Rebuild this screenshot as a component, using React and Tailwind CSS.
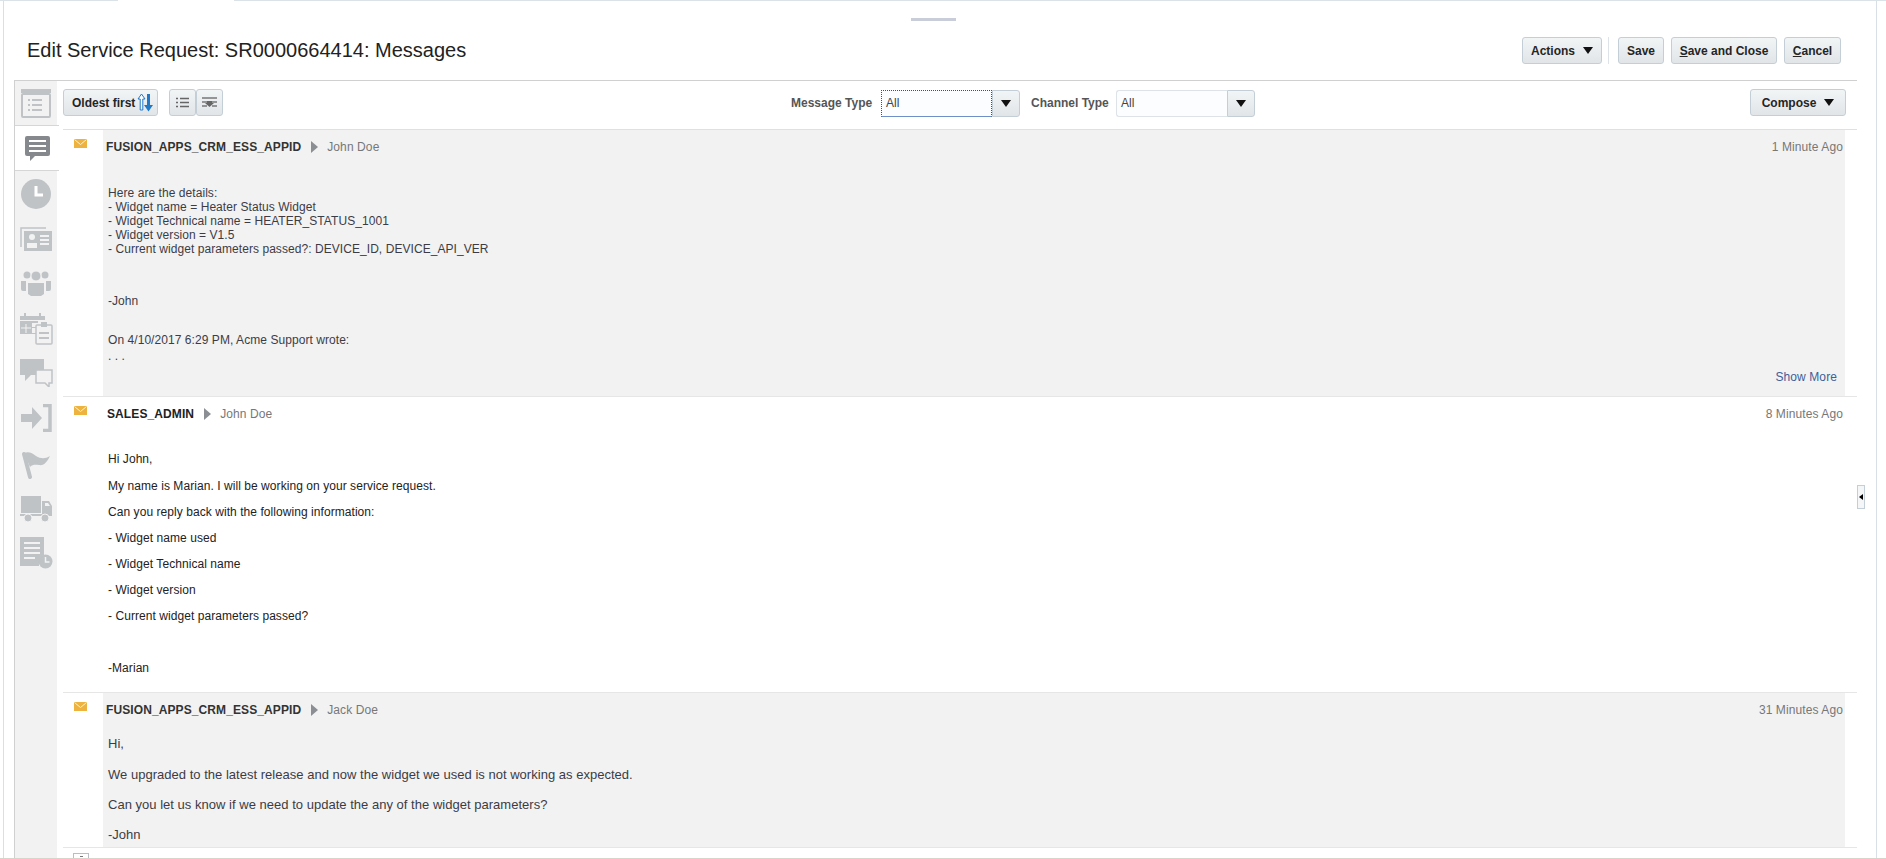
import React from 'react';

const Tri = ({ className = '' }) => (
  <svg width="10" height="7" viewBox="0 0 10 7" className={className}><path d="M0 0h10L5 7z" fill="#111" /></svg>
);

const Btn = ({ className = '', children }) => (
  <button className={`h-[27px] border border-[#c4ced7] rounded-[3px] bg-gradient-to-b from-[#f2f5f6] to-[#e1e5e8] text-[12px] font-bold text-[#252525] flex items-center justify-center ${className}`}>
    {children}
  </button>
);

const Envelope = () => (
  <svg width="13" height="9" viewBox="0 0 13 9" className="ml-[11px] mt-[9px]">
    <rect width="13" height="9" fill="#eeb33f" />
    <path d="M0.500 0.500L6.500 5.500L12.500 0.500" fill="none" stroke="#fdf2d0" strokeWidth="1" />
  </svg>
);

const Side = ({ active, h, children }) => (
  <div className={`flex items-center justify-center ${h} ${active ? 'bg-white border-y border-[#d6d6d6] w-[44px]' : ''}`}>{children}</div>
);

const G = '#bfc3c6';

const SideIcons = () => (
  <div className="w-[43px] shrink-0 bg-[#f2f2f2] border-l border-[#d0d0d0] flex flex-col">
    <Side h="h-[44px]">
      <svg width="30" height="29" viewBox="0 0 30 29">
        <rect x="0" y="0" width="30" height="4" fill={G} />
        <rect x="1" y="5" width="28" height="23" rx="1" fill="none" stroke={G} strokeWidth="2" />
        <path d="M7 11h2M11 11h10M7 16h2M11 16h10M7 21h2M11 21h10" stroke={G} strokeWidth="2" />
      </svg>
    </Side>
    <Side active h="h-[46px]">
      <svg width="25" height="25" viewBox="0 0 25 25">
        <path d="M2 0h21a2 2 0 0 1 2 2v16a2 2 0 0 1-2 2H10l-5 5v-5H2a2 2 0 0 1-2-2V2a2 2 0 0 1 2-2z" fill="#85898d" />
        <path d="M4 5h17M4 10h17M4 15h17" stroke="#fff" strokeWidth="2" />
      </svg>
    </Side>
    <Side h="h-[45px]">
      <svg width="30" height="30" viewBox="0 0 30 30">
        <circle cx="15" cy="15" r="15" fill={G} />
        <path d="M15 7v9h7" fill="none" stroke="#fff" strokeWidth="3" />
      </svg>
    </Side>
    <Side h="h-[45px]">
      <svg width="32" height="24" viewBox="0 0 32 24">
        <path d="M1 20V1h25" fill="none" stroke={G} strokeWidth="1.500" />
        <rect x="4" y="4" width="28" height="20" fill={G} />
        <circle cx="12" cy="10" r="3" fill="#f2f2f2" />
        <path d="M7 21v-5h10v5z" fill="#f2f2f2" />
        <path d="M20 9h9M20 13h9M20 17h9" stroke="#f2f2f2" strokeWidth="2" />
      </svg>
    </Side>
    <Side h="h-[45px]">
      <svg width="30" height="25" viewBox="0 0 30 25">
        <circle cx="6" cy="4" r="3.500" fill={G} /><circle cx="24" cy="4" r="3.500" fill={G} />
        <circle cx="15" cy="5" r="5" fill={G} stroke="#f2f2f2" />
        <path d="M0 10h5v10H2a2 2 0 0 1-2-2zM25 10h5v8a2 2 0 0 1-2 2h-3z" fill={G} />
        <path d="M7 12h16v11l-3 2H10l-3-2z" fill={G} />
      </svg>
    </Side>
    <Side h="h-[44px]">
      <svg width="33" height="33" viewBox="0 0 33 33">
        <path d="M0 4h25v4H0zM0 9h18v2h-6v4h5v1h-5v5h5v1H0z" fill={G} />
        <path d="M5 1v5M20 1v5" stroke={G} strokeWidth="2" />
        <path d="M6 12v9M1 16h10" stroke="#f2f2f2" strokeWidth="1" />
        <rect x="16" y="13" width="16" height="19" rx="1" fill="#f2f2f2" stroke={G} strokeWidth="1.500" />
        <rect x="21" y="10" width="6" height="5" fill={G} />
        <path d="M19 21h10M19 26h10" stroke={G} strokeWidth="2" />
      </svg>
    </Side>
    <Side h="h-[45px]">
      <svg width="33" height="28" viewBox="0 0 33 28">
        <path d="M0 0h24v16H11l-6 6v-6H0z" fill={G} />
        <path d="M16 11h16v13h-3v4l-4-4h-9z" fill="#f2f2f2" stroke={G} strokeWidth="1.500" />
      </svg>
    </Side>
    <Side h="h-[45px]">
      <svg width="31" height="28" viewBox="0 0 31 28">
        <path d="M0 10h11V3l10 11-10 11v-7H0z" fill={G} />
        <path d="M22 1.500h7v25h-7" fill="none" stroke={G} strokeWidth="3.500" />
      </svg>
    </Side>
    <Side h="h-[46px]">
      <svg width="30" height="28" viewBox="0 0 30 28" className="mt-[3px]">
        <path d="M3 3l6 23" stroke={G} strokeWidth="4" strokeLinecap="round" />
        <path d="M3 2c5-2 8 0 12 3 5 3 9 3 14 0-3 6-6 10-11 9-3 0-6-1-9 2z" fill={G} />
      </svg>
    </Side>
    <Side h="h-[44px]">
      <svg width="32" height="26" viewBox="0 0 32 26" className="mt-[2px]">
        <rect x="1" y="0" width="20" height="17" fill={G} />
        <path d="M22 5h7l3 5v8H22z" fill={G} />
        <path d="M25 7h3l2 3h-5z" fill="#f2f2f2" />
        <rect x="0" y="18" width="32" height="2" fill={G} />
        <circle cx="8" cy="22" r="4" fill={G} stroke="#f2f2f2" /><circle cx="25" cy="22" r="4" fill={G} stroke="#f2f2f2" />
      </svg>
    </Side>
    <Side h="h-[46px]">
      <svg width="33" height="32" viewBox="0 0 33 32">
        <path d="M0 0h24v20a8 8 0 0 0-5 9H0z" fill={G} />
        <path d="M4 6h16M4 11h16M4 16h16M4 21h11" stroke="#f2f2f2" strokeWidth="2" />
        <circle cx="25.500" cy="24.500" r="7" fill={G} />
        <path d="M25.500 20v5h4" fill="none" stroke="#f2f2f2" strokeWidth="1.500" />
      </svg>
    </Side>
  </div>
);

const Select = ({ focused }) => (
  <div className="flex h-[27px] w-[139px]">
    <div className={`flex-1 flex items-center pl-[4px] text-[12px] text-[#444] bg-[#fbfdff] ${focused ? 'border border-dotted border-[#2b4fa8] border-b-[#6f8fc9] [border-bottom-style:solid]' : 'border border-r-0 border-[#dde3e8] rounded-l-[3px]'}`}>All</div>
    <div className="w-[28px] flex items-center justify-center border border-[#c4ced7] rounded-r-[3px] bg-gradient-to-b from-[#f2f5f6] to-[#e1e5e8]">
      <Tri />
    </div>
  </div>
);

const MsgHead = ({ from, to, time, fromClass = 'text-[#333]', left = 'pl-[3px]' }) => (
  <div className={`flex items-center h-[34px] ${left} pr-[2px] text-[12px] tracking-[0.1px]`}>
    <span className={`font-bold ${fromClass}`}>{from}</span>
    <svg width="7" height="12" viewBox="0 0 7 12" className="ml-[10px] mr-[9px]"><path d="M0 0l7 6-7 6z" fill="#8b8f93" /></svg>
    <span className="text-[#777]">{to}</span>
    <span className="ml-auto text-[#777]">{time}</span>
  </div>
);

export default function App() {
  return (
    <div className="relative h-[859px] w-[1886px] overflow-hidden bg-white border-b border-[#d8d3cb] font-['Liberation_Sans',Arial,sans-serif]">
      <div className="flex h-[1px] bg-[#dbe2e8]">
        <div className="ml-[118px] w-[116px] bg-white" />
      </div>
      <div className="ml-[3px] mr-[9px] h-[858px] border-x border-[#d9dfe6] pl-[10px] pr-[19px]">
        <div className="h-[80px] relative flex items-end pb-[18px] border-b border-[#d0d0d0]">
          <div className="absolute left-[897px] top-[17px] w-[45px] h-[3px] bg-[#c9cdd9]" />
          <h1 className="ml-[13px] text-[20px] leading-[24px] text-[#222] font-normal">Edit Service Request: SR0000664414: Messages</h1>
          <div className="ml-auto mr-[16px] flex items-center -mb-[2px]">
            <Btn className="w-[80px] gap-[8px]">Actions <Tri /></Btn>
            <div className="w-px h-[27px] bg-[#dde3e8] ml-[6px] mr-[9px]" />
            <Btn className="w-[46px]">Save</Btn>
            <Btn className="w-[106px] ml-[7px]"><span><u>S</u>ave and Close</span></Btn>
            <Btn className="w-[57px] ml-[7px]"><span><u>C</u>ancel</span></Btn>
          </div>
        </div>
        <div className="flex h-[777px]">
          <SideIcons />
          <div className="flex-1 min-w-0 pl-[6px] relative">
            <div className="h-[49px] flex items-center border-b border-[#dde1e5] pr-[11px] pb-[5px]">
              <Btn className="w-[95px] gap-[2px] !justify-start pl-[8px]">
                Oldest first
                <svg width="16" height="19" viewBox="0 0 16 19">
                  <path d="M4.500 1L1 6h2.200v11h2.600V6H8z" fill="#fff" stroke="#1f78c8" strokeWidth="1" />
                  <path d="M10 1h3v11h3l-4.500 6.500L7 12h3z" fill="#1f78c8" />
                </svg>
              </Btn>
              <Btn className="w-[27px] ml-[11px]">
                <svg width="13" height="11" viewBox="0 0 13 11"><path d="M0 1.500h2M4 1.500h9M0 5.500h2M4 5.500h9M0 9.500h2M4 9.500h9" stroke="#666" strokeWidth="1.500" /></svg>
              </Btn>
              <Btn className="w-[27px]">
                <svg width="15" height="11" viewBox="0 0 15 11"><path d="M0 1h15M0 5h5M10 5h5M0 9h5M10 9h5" stroke="#777" strokeWidth="1.500" /><path d="M5 4h5v2h2l-4.500 4L3 6h2z" fill="#666" /></svg>
              </Btn>
              <div className="absolute left-[734px] top-0 h-[44px] flex items-center">
                <span className="text-[12px] font-bold text-[#555] w-[90px]">Message Type</span>
                <Select focused />
                <span className="text-[12px] font-bold text-[#555] ml-[11px] w-[85px]">Channel Type</span>
                <Select />
              </div>
              <Btn className="w-[96px] ml-auto gap-[8px]">Compose <Tri /></Btn>
            </div>

            <div className="h-[267px] flex border-b border-[#e6e6e6]">
              <div className="w-[40px] shrink-0"><Envelope /></div>
              <div className="flex-1 mr-[12px] bg-[#f2f2f2] relative">
                <MsgHead from="FUSION_APPS_CRM_ESS_APPID" to="John Doe" time="1 Minute Ago" />
                <div className="pl-[5px] pt-[22px] text-[12px] leading-[14px] text-[#3c3c46] tracking-[0.06px]">
                  <div>Here are the details:</div>
                  <div>- Widget name = Heater Status Widget</div>
                  <div>- Widget Technical name = HEATER_STATUS_1001</div>
                  <div>- Widget version = V1.5</div>
                  <div>- Current widget parameters passed?: DEVICE_ID, DEVICE_API_VER</div>
                  <div className="mt-[38px]">-John</div>
                  <div className="mt-[25px]">On 4/10/2017 6:29 PM, Acme Support wrote:</div>
                  <div className="mt-[2px]">. . .</div>
                </div>
                <div className="absolute right-[8px] bottom-[10px] text-[12px] text-[#3d6098] tracking-[0.1px]">Show More</div>
              </div>
            </div>

            <div className="h-[296px] flex border-b border-[#e6e6e6]">
              <div className="w-[40px] shrink-0"><Envelope /></div>
              <div className="flex-1 mr-[12px]">
                <MsgHead from="SALES_ADMIN" to="John Doe" time="8 Minutes Ago" fromClass="text-[#222]" left="pl-[4px]" />
                <div className="pl-[5px] pt-[21px] text-[12px] text-[#222] tracking-[0.06px]">
                  {['Hi John,', 'My name is Marian. I will be working on your service request.', 'Can you reply back with the following information:', '- Widget name used', '- Widget Technical name', '- Widget version', '- Current widget parameters passed?'].map((t, i) => (
                    <div key={t} className={`leading-[14px] ${i === 0 ? 'h-[27px]' : 'h-[26px]'}`}>{t}</div>
                  ))}
                  <div className="mt-[26px] leading-[14px]">-Marian</div>
                </div>
              </div>
            </div>

            <div className="h-[155px] flex border-b border-[#e6e6e6]">
              <div className="w-[40px] shrink-0"><Envelope /></div>
              <div className="flex-1 mr-[12px] bg-[#f2f2f2]">
                <MsgHead from="FUSION_APPS_CRM_ESS_APPID" to="Jack Doe" time="31 Minutes Ago" />
                <div className="pl-[5px] pt-[9px] text-[13px] text-[#3c3c46] tracking-[0.02px]">
                  {['Hi,', 'We upgraded to the latest release and now the widget we used is not working as expected.', 'Can you let us know if we need to update the any of the widget parameters?', '-John'].map((t, i) => (
                    <div key={t} className={`leading-[16px] ${i === 0 ? 'h-[31px]' : 'h-[30px]'}`}>{t}</div>
                  ))}
                </div>
              </div>
            </div>
            <div className="ml-[10px] mt-[5px] w-[16px] h-[10px] border border-[#b8bec4] flex justify-center pt-[2px]">
              <div className="w-[3px] h-px bg-[#777]" />
            </div>

            <div className="absolute right-[-8px] top-[404px] w-[8px] h-[24px] border border-[#c4ced7] bg-[#f4f6f8] flex items-center justify-center">
              <svg width="4" height="6" viewBox="0 0 4 6"><path d="M4 0v6L0 3z" fill="#000" /></svg>
            </div>
          </div>
        </div>
      </div>
    </div>
  );
}
